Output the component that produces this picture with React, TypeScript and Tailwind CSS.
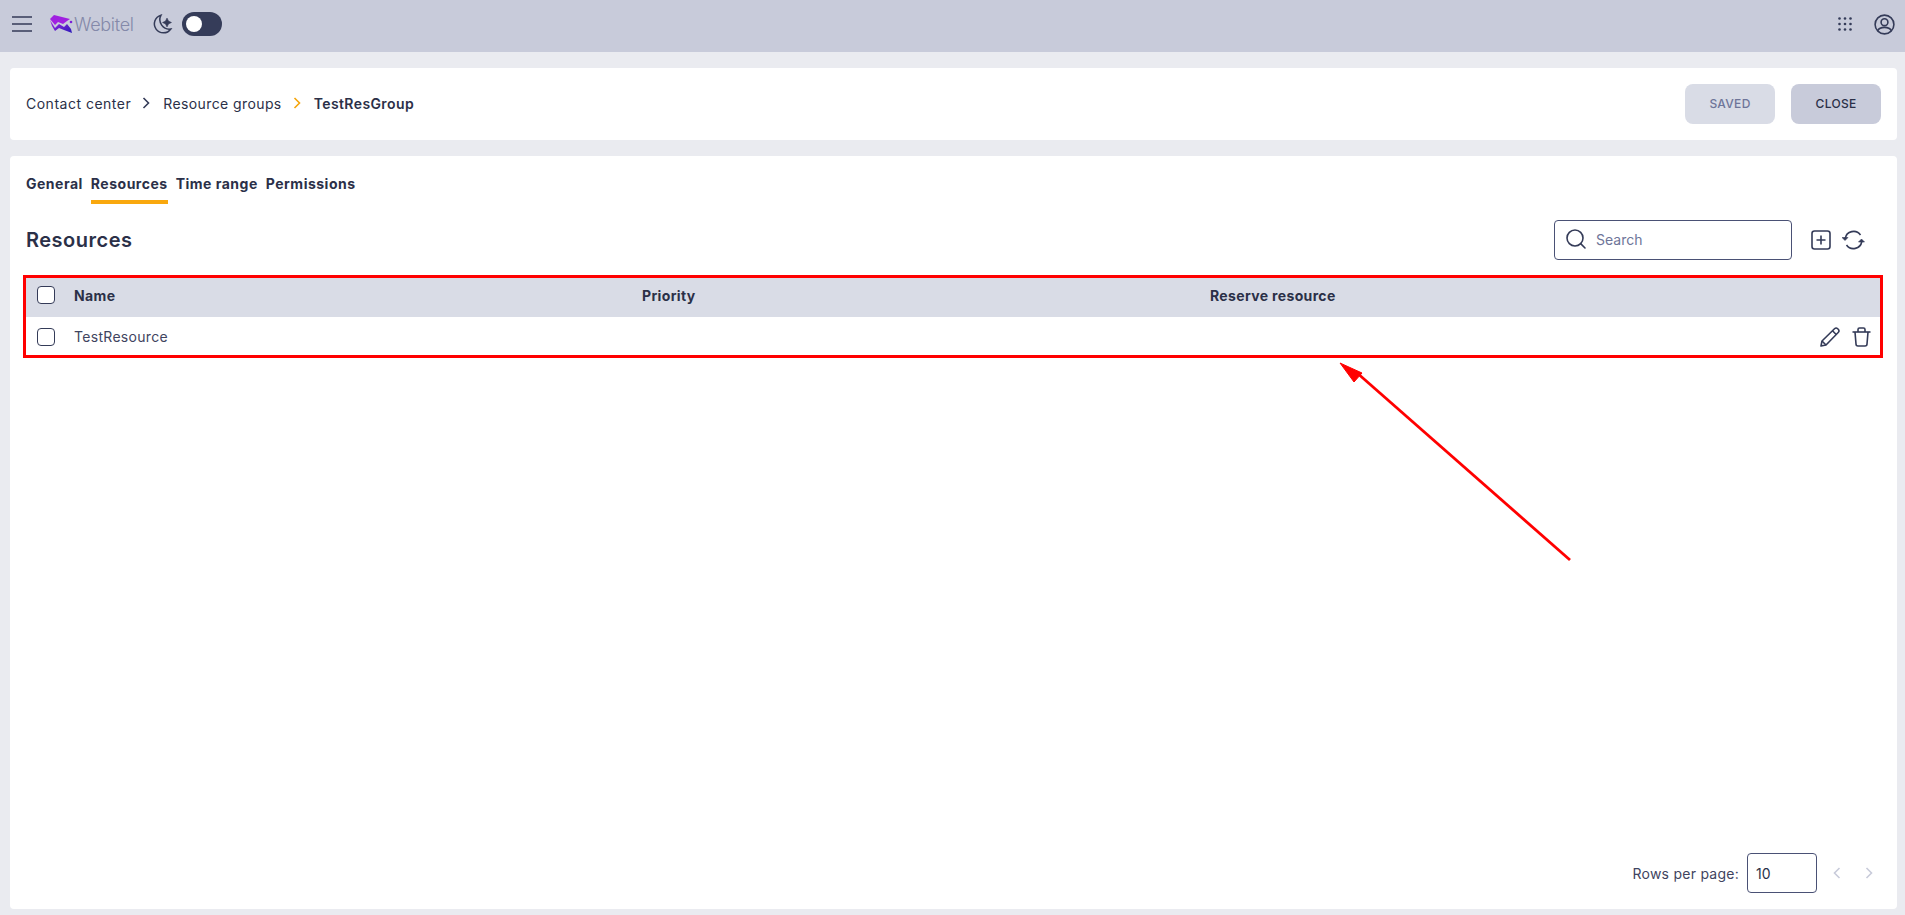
import { Search } from 'lucide-react';

const ink = '#343b58';

function Checkbox() {
  return <div className="h-[18px] w-[18px] rounded-[4px] border border-[#343b58] bg-white" />;
}

function MenuIcon() {
  return (
    <svg width="20" height="16" viewBox="0 0 20 16" fill="none" stroke={ink} strokeWidth="1.6">
      <path d="M0 1h20M0 8h20M0 15h20" />
    </svg>
  );
}

function Logo() {
  return (
    <svg width="24" height="18" viewBox="0 0 24 18">
      <defs>
        <linearGradient id="lg" x1="0" y1="0" x2="1" y2="1">
          <stop offset="0" stopColor="#a823e8" />
          <stop offset="1" stopColor="#2a1bb8" />
        </linearGradient>
      </defs>
      <path d="M0 4 L4 0 L20 4 L17 6 L13 9 L8 7 L5 10 Z" fill="#a020e0" />
      <path d="M0 5 L5 13 L9 9 L14 12 L17 9 L21 14 L22 18 L14 15 L9 13 L5 16 L2 11 Z" fill="url(#lg)" />
      <circle cx="21" cy="7" r="1.3" fill="#7c20d8" />
    </svg>
  );
}

function MoonIcon() {
  return (
    <svg width="21" height="21" viewBox="0 0 21 21" fill="none" stroke={ink} strokeWidth="1.5">
      <path d="M9 1.200A9 9 0 1 0 18.800 15 9.500 9.500 0 0 1 9 1.200Z" />
      <path d="M15 4l1.500 3 3 1.500-3 1.500-1.500 3-1.500-3-3-1.500 3-1.500z" fill={ink} strokeWidth="0.5" />
    </svg>
  );
}

function AppsIcon() {
  const pos = [1.5, 7, 12.5];
  return (
    <svg width="14" height="14" viewBox="0 0 14 14" fill={ink}>
      {pos.map((y) => pos.map((x) => <circle key={`${x}-${y}`} cx={x} cy={y} r="1.3" />))}
    </svg>
  );
}

function UserIcon() {
  return (
    <svg width="21" height="21" viewBox="0 0 21 21" fill="none" stroke={ink} strokeWidth="1.6">
      <circle cx="10.5" cy="10.5" r="9.4" />
      <circle cx="10.5" cy="8.2" r="3.4" />
      <path d="M3.8 16.6c1-2.2 3.6-3.2 6.7-3.2s5.700 1 6.700 3.200" />
    </svg>
  );
}

function AddIcon() {
  return (
    <svg width="20" height="20" viewBox="0 0 20 20" fill="none" stroke={ink} strokeWidth="1.6">
      <rect x="1" y="1" width="18" height="18" rx="2.5" />
      <path d="M10 5.500v9M5.500 10h9" />
    </svg>
  );
}

function RefreshIcon() {
  return (
    <svg width="23" height="20" viewBox="0 0 23 20" fill="none" stroke={ink} strokeWidth="1.6">
      <path d="M3.200 8.500A8.500 8.500 0 0 1 18.500 5" />
      <path d="M19.800 11.500A8.500 8.500 0 0 1 4.500 15" />
      <path d="M0.500 8l3 3 3-3z" fill={ink} strokeWidth="0.6" transform="translate(-0.500 -0.500)" />
      <path d="M16.500 12l3-3 3 3z" fill={ink} strokeWidth="0.6" />
    </svg>
  );
}

function EditIcon() {
  return (
    <svg width="20" height="20" viewBox="0 0 20 20" fill="none" stroke={ink} strokeWidth="1.6" strokeLinejoin="round">
      <path d="M1 19l1-5L14.500 1.800a2.300 2.300 0 0 1 3.200 0l.5.500a2.300 2.300 0 0 1 0 3.200L6 18z" />
      <path d="M2 14l4 4M12.500 3.800l3.700 3.700" />
    </svg>
  );
}

function TrashIcon() {
  return (
    <svg width="19" height="20" viewBox="0 0 19 20" fill="none" stroke={ink} strokeWidth="1.6" strokeLinejoin="round">
      <path d="M0.500 5h18" />
      <path d="M6 5V2.500A1.500 1.500 0 0 1 7.500 1h4A1.500 1.500 0 0 1 13 2.500V5" />
      <path d="M3 5l1 12a2 2 0 0 0 2 2h7a2 2 0 0 0 2-2l1-12" />
    </svg>
  );
}

function Chevron({ left, color }: { left?: boolean; color: string }) {
  return (
    <svg width="8" height="12" viewBox="0 0 8 12" fill="none" stroke={color} strokeWidth="1.6">
      <path d={left ? 'M6.500 1L1.500 6l5 5' : 'M1.500 1l5 5-5 5'} />
    </svg>
  );
}

export default function App() {
  return (
    <div className="relative flex h-[915px] flex-col overflow-hidden bg-[#eaebf0] font-['Inter',sans-serif] text-[#2b3048]">
      <header className="flex h-[52px] shrink-0 items-center bg-[#c8cbda] pb-[4px] pl-3 pr-[10px]">
        <MenuIcon />
        <div className="ml-[18px] flex items-center">
          <Logo />
          <span className="w-[60px] text-[18px] font-light tracking-[-0.3px] text-[#8489a9]">Webitel</span>
        </div>
        <div className="ml-[18px]"><MoonIcon /></div>
        <div className="ml-[9px] flex h-6 w-10 items-center rounded-full bg-[#353c59] pl-1">
          <div className="h-4 w-4 rounded-full bg-white" />
        </div>
        <div className="ml-auto flex items-center gap-[22px]">
          <AppsIcon />
          <UserIcon />
        </div>
      </header>

      <div className="flex flex-1 flex-col gap-4 pb-[6px] pl-[10px] pr-2 pt-4">
        <section className="flex h-[72px] items-center justify-between rounded-[4px] bg-white pl-4 pr-4">
          <nav className="flex items-center pb-[2px] text-[14px] tracking-[0.5px]">
            <span>Contact center</span>
            <span className="ml-[11px] mr-[13px]"><Chevron color={ink} /></span>
            <span className="tracking-[0.4px]">Resource groups</span>
            <span className="ml-[11px] mr-[13px]"><Chevron color="#f5a50b" /></span>
            <span className="font-semibold tracking-[0.4px]">TestResGroup</span>
          </nav>
          <div className="flex gap-4">
            <button type="button" className="h-10 w-[90px] rounded-lg bg-[#d9dce6] text-[12px] font-medium tracking-[0.3px] text-[#6e7599]">SAVED</button>
            <button type="button" className="h-10 w-[90px] rounded-lg bg-[#c8cbda] text-[12px] font-medium tracking-[0.3px] text-[#2b3048]">CLOSE</button>
          </div>
        </section>

        <section className="flex flex-1 flex-col rounded-[4px] bg-white px-4">
          <div className="flex gap-2 pt-[17px] text-[14px] font-bold tracking-[0.5px]">
            <span className="pb-[10px]">General</span>
            <span className="border-b-4 border-[#f9a80e] pb-[6px]">Resources</span>
            <span className="pb-[10px]">Time range</span>
            <span className="pb-[10px]">Permissions</span>
          </div>

          <div className="mt-4 flex h-10 items-center justify-between">
            <h2 className="text-[20px] font-semibold tracking-[0.5px]">Resources</h2>
            <div className="mr-4 flex items-center">
              <div className="flex h-10 w-[238px] items-center gap-2 rounded-[4px] border border-[#4a5175] pb-[2px] pl-[9px]">
                <Search size={24} color={ink} strokeWidth={1.6} />
                <span className="text-[14px] text-[#6e7599]">Search</span>
              </div>
              <div className="ml-[19px]"><AddIcon /></div>
              <div className="ml-[11px]"><RefreshIcon /></div>
            </div>
          </div>

          <div className="mt-[15px] -mr-px">
            <div className="grid h-[42px] grid-cols-[48px_568px_568px_1fr] items-center bg-[#d9dce6] pb-[2px] text-[14px] font-bold tracking-[0.35px]">
              <div className="pl-[11px]"><Checkbox /></div>
              <span>Name</span>
              <span>Priority</span>
              <span>Reserve resource</span>
            </div>
            <div className="grid h-[39px] grid-cols-[48px_1fr_auto] items-center bg-white text-[14px]">
              <div className="pl-[11px]"><Checkbox /></div>
              <span className="tracking-[0.3px] text-[#3f4460]">TestResource</span>
              <div className="flex items-center gap-[12px] pr-[11px]">
                <EditIcon />
                <TrashIcon />
              </div>
            </div>
          </div>

          <div className="mt-auto flex items-center justify-end pb-4">
            <span className="text-[14px] tracking-[0.25px] text-[#3f4460]">Rows per page:</span>
            <div className="ml-2 flex h-10 w-[70px] items-center rounded-[4px] border border-[#4a5175] pl-2 text-[14px]">10</div>
            <div className="ml-4 mr-2 flex items-center gap-6">
              <Chevron left color="#c8cbda" />
              <Chevron color="#c8cbda" />
            </div>
          </div>
        </section>
      </div>

      {/* annotation drawn over the screenshot */}
      <div className="absolute left-[23px] top-[275px] h-[83px] w-[1860px] border-[3px] border-[#ff0000]" />
      <svg className="absolute left-[1330px] top-[355px]" width="245" height="210" viewBox="0 0 245 210" fill="none">
        <path d="M240 205L26 17" stroke="#ff0000" strokeWidth="2.800" />
        <path d="M10 8L32 18L24 27Z" fill="#ff0000" stroke="#ff0000" strokeWidth="1" />
      </svg>
    </div>
  );
}
